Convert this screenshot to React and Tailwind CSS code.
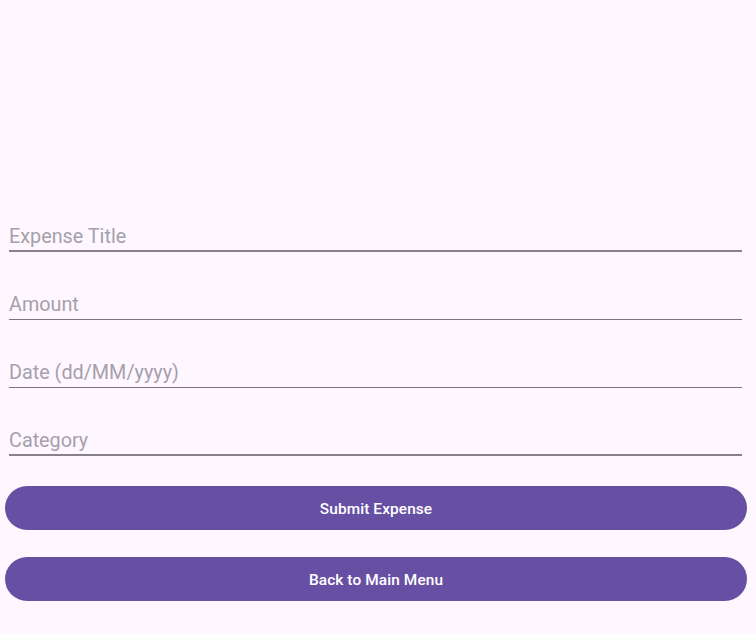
export default function App() {
  const fields = [
    { label: "Expense Title", thick: true },
    { label: "Amount", thick: false },
    { label: "Date (dd/MM/yyyy)", thick: false },
    { label: "Category", thick: true },
  ];
  return (
    <div
      className="w-[756px] h-[634px] bg-[#fef7ff] flex flex-col"
      style={{ fontFamily: "Roboto, 'Noto Sans', sans-serif" }}
    >
      <div className="pt-[225px] px-[9px] pr-[14px] flex flex-col gap-[41px]">
        {fields.map((f) => (
          <div
            key={f.label}
            className={
              f.thick
                ? "text-[19.8px] leading-[24px] text-[#a5a0aa] pb-[1px] border-b-2 border-[#86818c]"
                : "text-[19.8px] leading-[24px] text-[#a5a0aa] pb-[2px] border-b border-[#79747e]"
            }
          >
            {f.label}
          </div>
        ))}
      </div>
      <div className="mt-[30px] px-[5px] pr-[9px] flex flex-col gap-[27px]">
        <button className="h-[44px] w-full rounded-full bg-[#6750a4] text-white text-[15.4px] tracking-[0.11px] font-medium flex items-center justify-center pt-[3px]">
          Submit Expense
        </button>
        <button className="h-[44px] w-full rounded-full bg-[#6750a4] text-white text-[15.4px] tracking-[0.11px] font-medium flex items-center justify-center pt-[3px]">
          Back to Main Menu
        </button>
      </div>
    </div>
  );
}
